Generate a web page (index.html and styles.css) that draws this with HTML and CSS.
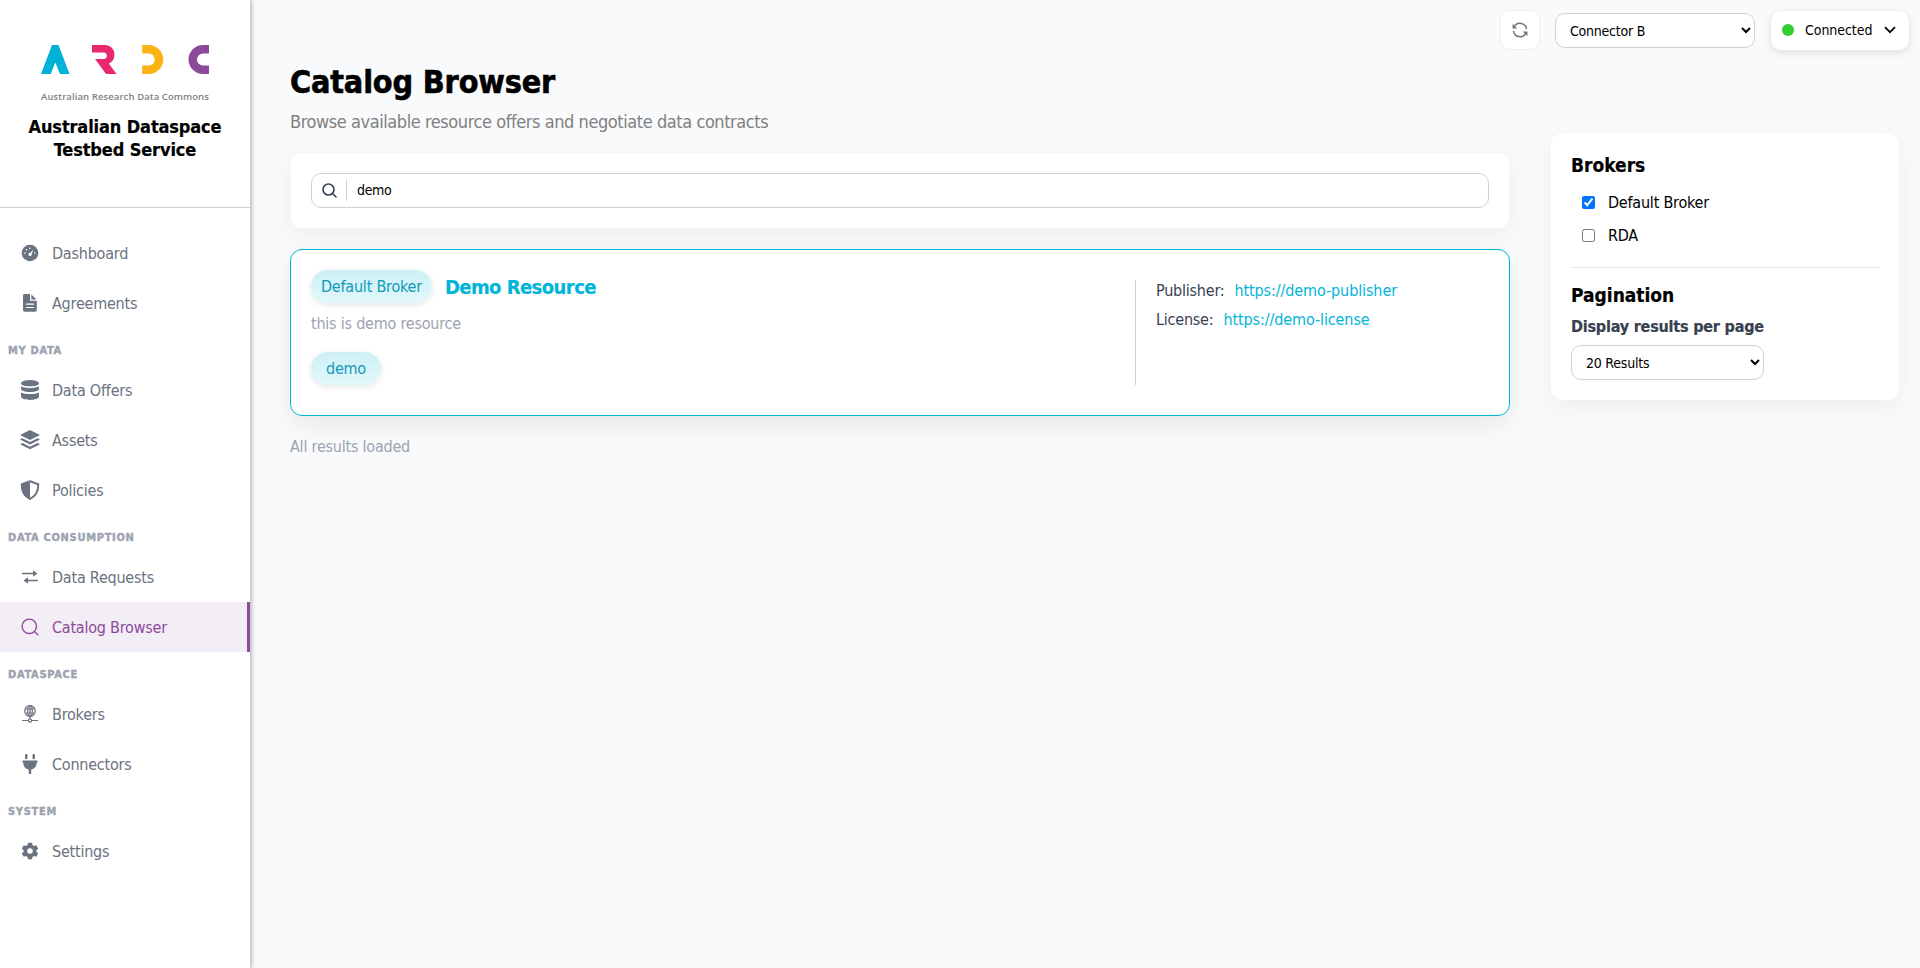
FILE: index.html
```html
<!DOCTYPE html>
<html lang="en">
<head>
<meta charset="utf-8">
<title>Catalog Browser</title>
<link rel="stylesheet" href="styles.css">
</head>
<body>
<div class="app">
  <aside class="sidebar">
    <div class="brand">
      <svg class="logo" width="168" height="29" viewBox="0 0 168 29">
        <path fill="#00b1d8" d="M11 0h6.500L28.500 29H19L14.300 17.500 9.700 29H0z"/>
        <path fill="#e92870" d="M51 0H64.500a8.800 8.800 0 0 1 8.800 9v1.500a8.500 8.500 0 0 1-5.500 8L75.500 29H65L54 14h8.500a3.200 3.200 0 0 0 0-6.500H51z"/>
        <path fill="#fab313" d="M101.200 0h6.500a14.500 14.500 0 0 1 0 29h-6.500v-8.500h6.500a6 6 0 0 0 0-12h-6.500z"/>
        <path fill="#8d4a9b" d="M168 0h-6a14.500 14.500 0 0 0 0 29h6v-8.500h-6a6 6 0 0 1 0-12h6z"/>
      </svg>
      <div class="logo-sub">Australian Research Data Commons</div>
      <div class="brand-title">Australian Dataspace<br>Testbed Service</div>
    </div>
    <nav class="nav">
      <a class="item"><svg class="icon" viewBox="0 0 20 20"><circle cx="10" cy="10" r="8.300" fill="currentColor"/><g fill="#fff"><circle cx="5" cy="10" r=".8"/><circle cx="6.500" cy="6.700" r=".8"/><circle cx="9.800" cy="5.300" r=".8"/><circle cx="14.800" cy="10" r=".8"/><path d="M13.700 6.200l-2.100 4.600a1.600 1.600 0 1 1-1.200-1z"/></g></svg>Dashboard</a>
      <a class="item"><svg class="icon" viewBox="0 0 20 20"><path fill="currentColor" d="M4.500 1h5.500v6.800h6.800V17a1.800 1.800 0 0 1-1.800 1.800H4.800A1.800 1.800 0 0 1 3 17V2.500A1.500 1.500 0 0 1 4.500 1z"/><path fill="currentColor" d="M11.300 1.400l5.200 5.200h-5.200z"/><path stroke="#fff" stroke-width="1.200" stroke-linecap="round" d="M6.500 11.200h7M6.500 14.500h7"/></svg>Agreements</a>
      <h3 class="group">MY DATA</h3>
      <a class="item"><svg class="icon" viewBox="0 0 20 20"><g fill="currentColor"><ellipse cx="10" cy="3.400" rx="9" ry="3.400"/><path d="M1 5.800c3 2.300 15 2.300 18 0V9c0 1.700-4 3-9 3S1 10.700 1 9z"/><path d="M1 12.200c3 2.300 15 2.300 18 0v4.400c0 1.900-4 3.400-9 3.400s-9-1.500-9-3.400z"/></g><path fill="none" stroke="#fff" stroke-width="1.400" d="M.5 5c2 2.900 17 2.900 19 0M.5 11c2 3 17 3 19 0"/></svg>Data Offers</a>
      <a class="item"><svg class="icon" viewBox="0 0 20 20"><g fill="currentColor"><path d="M10 0l10 5-10 5L0 5z"/><path d="M0 9.500l2.500-1.200L10 12l7.500-3.700L20 9.500 10 14.600z"/><path d="M0 14.200L2.500 13l7.500 3.700 7.500-3.700 2.500 1.200-10 5.100z"/></g></svg>Assets</a>
      <a class="item"><svg class="icon" viewBox="0 0 20 20"><path fill="none" stroke="currentColor" stroke-width="2" d="M10 1.200l8.200 3C18.500 11 16 16 10 18.900 4 16 1.500 11 1.800 4.200z"/><path fill="currentColor" d="M10 1v18.500C4 16.500 1 11 1.500 4.200z"/></svg>Policies</a>
      <h3 class="group">DATA CONSUMPTION</h3>
      <a class="item"><svg class="icon" viewBox="0 0 20 20"><g fill="currentColor"><path d="M2 5.800h11V3.300l4.500 3.200L13 9.700V7.200H2z"/><path d="M18 14.200H8v2.500l-4.500-3.200L8 10.300v2.500h10z"/></g></svg>Data Requests</a>
      <a class="item active"><svg class="icon" viewBox="0 0 20 20"><g fill="none" stroke="currentColor" stroke-width="1.400" stroke-linecap="round"><circle cx="9.300" cy="9.300" r="7.200"/><path d="M14.500 14.500l3.300 3.200"/></g></svg>Catalog Browser</a>
      <h3 class="group">DATASPACE</h3>
      <a class="item"><svg class="icon" viewBox="0 0 20 20"><g fill="none" stroke="currentColor" stroke-width="1.200"><circle cx="10" cy="7" r="5.300"/><ellipse cx="10" cy="7" rx="2.300" ry="5.300"/><path d="M10 1.700v13M5.200 5h9.600M5.200 9h9.600M2 16.500h6M12 16.500h6"/><circle cx="10" cy="16.500" r="1.600"/></g></svg>Brokers</a>
      <a class="item"><svg class="icon" viewBox="0 0 20 20"><g fill="currentColor"><rect x="5" y="0" width="2.500" height="5.300" rx="1.200"/><rect x="12.500" y="0" width="2.500" height="5.300" rx="1.200"/><path d="M2.500 6.500h15v2h-.8c0 3.800-2.200 6.500-5.500 7V20H8.800v-4.500c-3.300-.5-5.500-3.200-5.500-7h-.8z"/></g></svg>Connectors</a>
      <h3 class="group">SYSTEM</h3>
      <a class="item"><svg class="icon" viewBox="0 0 20 20"><path fill="currentColor" fill-rule="evenodd" d="M8 1.800h4l.5 2.300 1.400.8 2.300-.7 2 3.400-1.800 1.600v1.600l1.800 1.600-2 3.400-2.300-.7-1.400.8-.5 2.300H8l-.5-2.300-1.400-.8-2.300.7-2-3.400 1.800-1.600V9.200L1.800 7.600l2-3.400 2.300.7 1.400-.8zM10 7.200a2.800 2.800 0 1 0 0 5.600 2.800 2.800 0 0 0 0-5.600z"/></svg>Settings</a>
    </nav>
  </aside>

  <div class="page">
    <header class="topbar">
      <button class="refresh"><svg width="16" height="16" viewBox="0 0 16 16"><g fill="none" stroke="#6b7280" stroke-width="1.500"><path d="M2.200 5A6.500 6.500 0 0 1 14.500 7.200M13.800 11A6.500 6.500 0 0 1 1.500 8.800"/></g><path fill="#6b7280" d="M.6 1.800v4.600h4.600zM15.400 14.200V9.600h-4.600z"/></svg></button>
      <select class="select connector"><option>Connector B</option></select>
      <button class="status"><i class="dot"></i>Connected<svg width="12" height="8" viewBox="0 0 12 8"><path d="M1 1.200l5 5 5-5" fill="none" stroke="#000" stroke-width="1.700"/></svg></button>
    </header>
    <div class="columns">
      <main class="main">
        <h1>Catalog Browser</h1>
        <p class="lead">Browse available resource offers and negotiate data contracts</p>
        <section class="search-card">
          <div class="search">
            <svg width="15" height="15" viewBox="0 0 15 15"><g fill="none" stroke="#374151" stroke-width="1.600" stroke-linecap="round"><circle cx="6.500" cy="6.500" r="5.500"/><path d="M10.500 10.500l3.500 3.500"/></g></svg>
            <span class="search-text">demo</span>
          </div>
        </section>
        <article class="result">
          <div class="result-main">
            <div class="result-head"><span class="pill broker">Default Broker</span><h2>Demo Resource</h2></div>
            <p class="desc">this is demo resource</p>
            <span class="pill tag">demo</span>
          </div>
          <div class="meta">
            <div>Publisher:<a>https://demo-publisher</a></div>
            <div>License:<a>https://demo-license</a></div>
          </div>
        </article>
        <p class="end">All results loaded</p>
      </main>
      <aside class="panel">
        <h4>Brokers</h4>
        <label class="check"><input type="checkbox" checked>Default Broker</label>
        <label class="check"><input type="checkbox">RDA</label>
        <hr>
        <h4>Pagination</h4>
        <div class="field-label">Display results per page</div>
        <select class="select per-page"><option>20 Results</option></select>
      </aside>
    </div>
  </div>
</div>
</body>
</html>
```
FILE: styles.css
```css
* { box-sizing: border-box; }
body { margin: 0; background: #f9fafc; color: #000; font-family: Tahoma, "DejaVu Sans Condensed", "DejaVu Sans", sans-serif; font-stretch: condensed; font-size: 16px; letter-spacing: -.22px; }
h1, h2, h3, h4, p { margin: 0; }
.app { display: flex; height: 968px; }
.sidebar { width: 250px; flex: none; background: #fff; box-shadow: 1px 0 5px rgba(0,0,0,.35); }
.brand { height: 208px; padding-top: 45px; border-bottom: 1px solid #d1d1d1; display: flex; flex-direction: column; align-items: center; }
.logo { display: block; flex: none; }
.logo-sub { margin-top: 14px; height: 18px; font: 600 9.500px/18px "Open Sans", sans-serif; color: #808285; letter-spacing: .1px; }
.brand-title { margin-top: 9px; font-size: 18px; font-weight: 700; line-height: 23px; text-align: center; letter-spacing: -.12px; -webkit-text-stroke: .2px; }
.nav { padding-top: 20px; }
.item { display: flex; align-items: center; gap: 12px; height: 50px; padding-left: 20px; color: #6b7280; }
.item.active { color: #8d4a9b; background: #f3eef6; border-right: 3px solid #8d4a9b; }
.icon { width: 20px; height: 20px; flex: none; }
.group { height: 37px; padding: 15px 0 0 8px; font-size: 11px; line-height: 16px; color: #9ca3af; letter-spacing: .7px; -webkit-text-stroke: .4px; }
.page { flex: 1; display: flex; flex-direction: column; }
.topbar { display: flex; justify-content: flex-end; align-items: center; height: 60px; padding-right: 11px; }
.refresh { width: 40px; height: 40px; margin-right: 15px; padding: 0; display: grid; place-items: center; border: 1px solid #eeeff1; border-radius: 8px; background: #fff; }
.select { height: 35px; padding: 0 0 0 10px; border: 1px solid #d1d1d1; border-radius: 10px; background: #fff; color: #000; font: inherit; font-size: 14px; letter-spacing: -.22px; }
.connector { width: 200px; margin: 1px 16px 0 0; }
.status { display: flex; align-items: center; width: 138px; height: 39px; padding: 0 0 0 11px; border: 0; border-radius: 10px; background: #fff; box-shadow: 0 2px 8px rgba(0,0,0,.12); font: inherit; font-size: 14px; letter-spacing: -.05px; color: #000; }
.dot { width: 12px; height: 12px; margin-right: 11px; border-radius: 50%; background: #32cd32; }
.status svg { margin-left: auto; margin-right: 13px; }
.columns { display: flex; gap: 41px; padding: 0 21px 0 40px; align-items: flex-start; }
.main { width: 1220px; }
h1 { font-size: 32px; line-height: 44px; letter-spacing: -.15px; -webkit-text-stroke: .6px; }
.lead { margin: 5px 0 17px; font-size: 18px; line-height: 26px; color: #808080; letter-spacing: -.43px; }
.search-card { padding: 20px; background: #fff; border: 1px solid #f4f5f7; border-radius: 12px; box-shadow: 0 8px 24px rgba(0,0,0,.05); }
.search { display: flex; align-items: center; height: 35px; padding-left: 10px; border: 1px solid #d1d1d1; border-radius: 10px; }
.search-text { margin-left: 9px; padding-left: 10px; border-left: 1px solid #d1d1d1; line-height: 21px; font-size: 14px; letter-spacing: -.35px; }
.result { display: flex; height: 167px; margin-top: 20px; padding: 20px; border: 1px solid #00b5d8; border-radius: 12px; background: #fff; box-shadow: 0 10px 24px rgba(0,0,0,.07); }
.result-main { width: 824px; }
.result-head { display: flex; align-items: center; gap: 13px; }
.pill { display: inline-block; height: 33px; line-height: 34px; border-radius: 17px; background: linear-gradient(#cdf0f5,#e3f8fc); color: #0e9ab8; box-shadow: 0 2px 6px rgba(0,0,0,.1); }
.broker { padding: 0 10px; }
.tag { padding: 0 15px; }
h2 { font-size: 20px; color: #00b5d8; letter-spacing: -.55px; -webkit-text-stroke: .2px; }
.desc { margin: 10px 0 18px; line-height: 21px; color: #9ca3af; }
.meta { margin: 10px 0; padding-left: 20px; border-left: 1px solid #d1d1d1; color: #374151; line-height: 21px; display: flex; flex-direction: column; gap: 8px; }
.meta a { margin-left: 10px; color: #00b5d8; letter-spacing: -.1px; }
.end { margin-top: 20px; line-height: 21px; color: #9ca3af; }
.panel { width: 348px; height: 267px; margin-top: 73px; padding: 20px; background: #fff; border-radius: 12px; box-shadow: 0 8px 24px rgba(0,0,0,.05); }
h4 { margin-bottom: 8px; font-size: 19px; line-height: 25px; letter-spacing: 0; -webkit-text-stroke: .2px; }
.check { display: flex; align-items: center; height: 33px; padding-left: 11px; gap: 13px; }
.check input { width: 13px; height: 13px; margin: 0; accent-color: #0075ff; }
hr { border: 0; border-top: 1px solid #e5e7eb; margin: 15px 0 15px; }
.field-label { margin-top: 9px; font-weight: 700; color: #374151; line-height: 20px; letter-spacing: -.2px; -webkit-text-stroke: .2px; }
.per-page { width: 193px; margin-top: 8px; }
```
